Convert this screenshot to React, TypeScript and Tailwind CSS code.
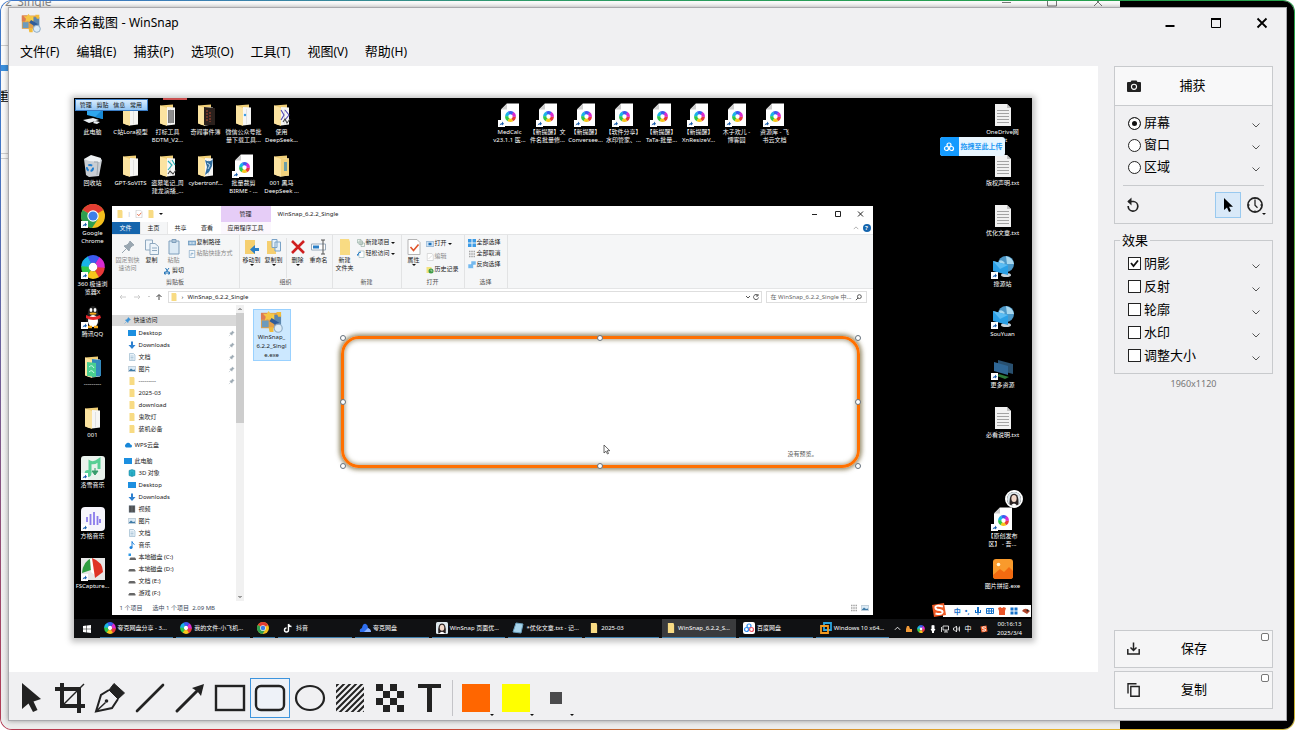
import { useState } from "react";
import type { ReactNode } from "react";

type IconKind =
  | "pc" | "folder" | "archive" | "dark" | "image" | "vs" | "teal" | "zip" | "blue" | "bin" | "link"
  | "chrome" | "rainbow" | "qq" | "green" | "music" | "wave" | "umbrella"
  | "text" | "globe" | "screens" | "photo";

interface DesktopItem {
  x: number;
  y: number;
  icon: IconKind;
  lines: string[];
}

const desktopItems: DesktopItem[] = [
  { x: 19, y: 5, icon: "pc", lines: ["此电脑"] },
  { x: 57, y: 5, icon: "folder", lines: ["C站Lora模型"] },
  { x: 94, y: 5, icon: "archive", lines: ["打标工具", "BDTM_V2..."] },
  { x: 132, y: 5, icon: "dark", lines: ["奇闻事件簿"] },
  { x: 170, y: 5, icon: "image", lines: ["微信公众号批", "量下载工具..."] },
  { x: 208, y: 5, icon: "vs", lines: ["使用", "DeepSeek..."] },
  { x: 19, y: 56, icon: "bin", lines: ["回收站"] },
  { x: 57, y: 56, icon: "folder", lines: ["GPT-SoVITS"] },
  { x: 94, y: 56, icon: "teal", lines: ["盗墓笔记_周", "建龙演播_..."] },
  { x: 132, y: 56, icon: "blue", lines: ["cybertronf..."] },
  { x: 170, y: 56, icon: "link", lines: ["批量裁剪", "BIRME - ..."] },
  { x: 208, y: 56, icon: "zip", lines: ["001 黑马", "DeepSeek ..."] },
  { x: 19, y: 106, icon: "chrome", lines: ["Google", "Chrome"] },
  { x: 19, y: 157, icon: "rainbow", lines: ["360 极速浏", "览器X"] },
  { x: 19, y: 207, icon: "qq", lines: ["腾讯QQ"] },
  { x: 19, y: 257, icon: "green", lines: ["---------"] },
  { x: 19, y: 308, icon: "folder", lines: ["001"] },
  { x: 19, y: 358, icon: "music", lines: ["洛雪音乐"] },
  { x: 19, y: 409, icon: "wave", lines: ["方格音乐"] },
  { x: 19, y: 459, icon: "umbrella", lines: ["FSCapture..."] },
  { x: 436, y: 5, icon: "link", lines: ["MedCalc", "v23.1.1 医..."] },
  { x: 474, y: 5, icon: "link", lines: ["【新提醒】文", "件名批量修..."] },
  { x: 512, y: 5, icon: "link", lines: ["【新提醒】", "Conversee..."] },
  { x: 550, y: 5, icon: "link", lines: ["【软件分享】", "水印管家、..."] },
  { x: 588, y: 5, icon: "link", lines: ["【新提醒】", "TaTa-批量..."] },
  { x: 625, y: 5, icon: "link", lines: ["【新提醒】", "XnResizeV..."] },
  { x: 663, y: 5, icon: "link", lines: ["木子欢儿 -", "博客园"] },
  { x: 701, y: 5, icon: "link", lines: ["资源库 - 飞", "书云文档"] },
  { x: 929, y: 5, icon: "text", lines: ["OneDrive网", ".txt"] },
  { x: 929, y: 56, icon: "text", lines: ["版权声明.txt"] },
  { x: 929, y: 106, icon: "text", lines: ["优化文章.txt"] },
  { x: 929, y: 157, icon: "globe", lines: ["搜源站"] },
  { x: 929, y: 207, icon: "globe", lines: ["SouYuan"] },
  { x: 929, y: 258, icon: "screens", lines: ["更多资源"] },
  { x: 929, y: 308, icon: "text", lines: ["必看说明.txt"] },
  { x: 929, y: 409, icon: "link", lines: ["【原创发布", "区】 - 吾..."] },
  { x: 929, y: 459, icon: "photo", lines: ["图片拼接.exe"] },
];

const menus = [
  ["文件", "F"], ["编辑", "E"], ["捕获", "P"], ["选项", "O"], ["工具", "T"], ["视图", "V"], ["帮助", "H"],
];

const RAINBOW = ["#e93a3a", "#d92bd0", "#3b5bf0", "#19b4e8", "#2fc94b", "#f7c61b"];

const RainbowRing = ({ cx, cy, r, w }: { cx: number; cy: number; r: number; w: number }) => (
  <g fill="none" strokeWidth={w}>
    {RAINBOW.map((c, i) => (
      <circle
        key={c}
        cx={cx}
        cy={cy}
        r={r}
        stroke={c}
        pathLength={60}
        strokeDasharray="10.5 49.5"
        transform={`rotate(${-i * 60} ${cx} ${cy})`}
      />
    ))}
  </g>
);

const Shortcut = () => (
  <g>
    <rect x="0" y="17" width="7" height="7" fill="#fff" />
    <path d="M1.5 22.5 Q2 20 4 20 V18.5 L6 20.8 L4 22.6 V21.4 Q2.5 21.4 1.5 22.5Z" fill="#1b5fae" />
  </g>
);

const FolderBase = ({ children }: { children?: ReactNode }) => (
  <g>
    <path d="M4 2.5 L17 1.5 V20 L8 22 L4 20Z" fill="#f0cf78" />
    <path d="M11 4 L19 4.5 V21.5 L11 22.5Z" fill="#f6f6f4" />
    <path d="M4 2.5 L11 5 V23 L4 20.5Z" fill="#fbe3a0" />
    <path d="M14.5 6 V21.5" stroke="#dcdcdc" strokeWidth="0.8" />
    {children}
  </g>
);

const iconBody: Record<IconKind, ReactNode> = {
  pc: (
    <g>
      <path d="M6 4 L22 6 V16 L6 12Z" fill="#2ea6ee" />
      <path d="M22 6 V16 L14 14Z" fill="#1789d6" />
      <path d="M2 17 L12 15 L18 17 L8 20Z M14 18 l5 1 l-3 2 l-4 -1Z" fill="#e9eef2" />
    </g>
  ),
  folder: <FolderBase />,
  archive: (
    <FolderBase>
      <path d="M12 7 h6 v13 h-6Z" fill="#7d7d7d" />
      <path d="M14 7 v13 M16 7 v13" stroke="#b5b5b5" strokeWidth="0.6" />
    </FolderBase>
  ),
  dark: (
    <FolderBase>
      <path d="M10 4 L21 5 V22 L10 22Z" fill="#2b211d" />
      <path d="M13 7 v11 M16 9 v10" stroke="#8c3d2c" strokeWidth="1.4" strokeDasharray="2 1" />
    </FolderBase>
  ),
  image: (
    <FolderBase>
      <circle cx="13" cy="12" r="1.2" fill="#3b9be0" />
    </FolderBase>
  ),
  vs: (
    <FolderBase>
      <path d="M11 7 l3 5 l-3 5 M15 7 l4 5 l-4 5" stroke="#5148b5" strokeWidth="1.1" fill="none" />
      <path d="M13 19 l2 -3 l2 4 l3 -4" stroke="#444" strokeWidth="1.1" fill="none" />
    </FolderBase>
  ),
  teal: (
    <FolderBase>
      <path d="M12 7 l4 4 l-4 5 M16 6 l3 5" stroke="#27aeb2" strokeWidth="1.1" fill="none" />
      <path d="M12 20 l2 -3 l3 3 l3 -4" stroke="#444" strokeWidth="1.1" fill="none" />
    </FolderBase>
  ),
  blue: (
    <FolderBase>
      <path d="M11 6 Q16 9 19 5 L18 12 L15 18 L11 21 L13 13Z" fill="#2f6c9e" />
      <path d="M13 9 L16 11 L14 15" stroke="#cfe6f5" strokeWidth="0.9" fill="none" />
    </FolderBase>
  ),
  zip: (
    <FolderBase>
      <path d="M11 4 L19 4.5 V21.5 L11 22.5Z" fill="#f1d27c" />
      <path d="M14 8 h3 v9 h-3Z" fill="#6ca0a8" />
    </FolderBase>
  ),
  green: (
    <FolderBase>
      <path d="M11 4 L20 5 V21 L11 22Z" fill="#3389bd" />
      <path d="M6 7 L15 8 V22 L6 21Z" fill="#49cf91" />
      <path d="M8 12 q3 -3 5 1 M8 17 q3 -3 5 1" stroke="#d9fff0" strokeWidth="0.9" fill="none" />
    </FolderBase>
  ),
  bin: (
    <g>
      <path d="M3 5 L19 4 L21 6 L18 22 L8 23 L5 21Z" fill="#c9ced3" />
      <path d="M3 5 L10 1 L20 4 L19 8 L8 7Z" fill="#eef1f3" />
      <path d="M13 8 L17 8 L16 21" stroke="#9ca5ad" fill="none" />
      <circle cx="9" cy="14" r="3" fill="none" stroke="#1f7ed0" strokeWidth="2" strokeDasharray="4 2" />
    </g>
  ),
  link: (
    <g>
      <path d="M9 0.5 H21 V23 H3 V6.5Z" fill="#fff" />
      <path d="M9 0.5 V6.5 H3Z" fill="#cfcfcf" />
      <RainbowRing cx={12.5} cy={13.5} r={3.8} w={3.2} />
      <Shortcut />
    </g>
  ),
  chrome: (
    <g>
      <circle cx="12" cy="12" r="12" fill="#f4bf1d" />
      <path d="M12 12 L1.6 6 A12 12 0 0 1 22.4 6Z" fill="#e23d33" />
      <path d="M12 12 L1.6 6 A12 12 0 0 0 11 24 L17 15Z" fill="#2f9e50" />
      <circle cx="12" cy="12" r="5.7" fill="#fff" />
      <circle cx="12" cy="12" r="4.6" fill="#3f7fe8" />
    </g>
  ),
  rainbow: (
    <g>
      <RainbowRing cx={12} cy={12} r={8} w={7.5} />
      <circle cx="12" cy="12" r="4.3" fill="#fff" />
    </g>
  ),
  qq: (
    <g>
      <ellipse cx="12" cy="14" rx="7" ry="8" fill="#1b1b1b" />
      <ellipse cx="12" cy="7.5" rx="5" ry="6.5" fill="#222" />
      <ellipse cx="12" cy="16" rx="5" ry="6" fill="#fff" />
      <ellipse cx="10" cy="5" rx="1.4" ry="2" fill="#fff" />
      <ellipse cx="14" cy="5" rx="1.4" ry="2" fill="#fff" />
      <ellipse cx="12" cy="8.6" rx="3.5" ry="1.2" fill="#f5a81c" />
      <path d="M5 10 Q12 14 19 10 L20 13 Q12 17 5 13Z" fill="#e5262b" />
      <path d="M7 22 h4 M13 22 h4" stroke="#f5a81c" strokeWidth="2.4" />
      <Shortcut />
    </g>
  ),
  music: (
    <g>
      <rect width="24" height="24" rx="3" fill="#e9f2ec" />
      <path d="M9 17 V6 Q13 8 18 4 V13" stroke="#58cf95" strokeWidth="3" fill="none" />
      <circle cx="7" cy="17.5" r="3.4" fill="#58cf95" />
      <path d="M14 12 v5 M11 15 l3 4 l3 -4Z" fill="#359c6b" stroke="#359c6b" />
      <Shortcut />
    </g>
  ),
  wave: (
    <g>
      <rect width="24" height="24" rx="4" fill="#f6f5fb" />
      <path d="M6 10 v5 M9.5 7 v11 M13 5 v13 M16.5 9 v9 M19 12 v4" stroke="#8a7bea" strokeWidth="1.8" />
      <Shortcut />
    </g>
  ),
  umbrella: (
    <g>
      <rect y="1" width="24" height="22" fill="#e7e7e7" />
      <path d="M1 16 Q2 4 11 1 L10 13Z" fill="#2f9e41" />
      <path d="M9 2 L11 1 L15 19 L10 15Z" fill="#fff" />
      <path d="M11 1 Q22 5 22 15 L14 21Z" fill="#df3426" />
      <Shortcut />
    </g>
  ),
  text: (
    <g>
      <path d="M4 1 H16 L20 5 V23 H4Z" fill="#f1f1f1" />
      <path d="M16 1 V5 H20Z" fill="#c2c2c2" />
      <path d="M6 7.5 H18 M6 10.5 H18 M6 13.5 H18 M6 16.5 H18 M6 19.5 H18" stroke="#a3a3a3" strokeWidth="1" />
    </g>
  ),
  globe: (
    <g>
      <circle cx="15" cy="9" r="8" fill="#4c98c8" />
      <path d="M15 1 Q22 3 23 9 L16 9Z M8 6 Q11 4 14 8 L9 12Z" fill="#a9d8ef" />
      <ellipse cx="15" cy="20" rx="5" ry="2" fill="#c9d4db" />
      <path d="M2 6 L17 10 V20 L2 16Z" fill="#2ba0e6" />
      <path d="M2 6 L17 10 L9 14Z" fill="#5bbcf3" />
      <Shortcut />
    </g>
  ),
  screens: (
    <g>
      <path d="M7 4 L22 8 V18 L7 14Z" fill="#29506f" />
      <path d="M3 6 L17 10 V19 L3 15Z" fill="#2f6796" />
      <path d="M8 18 L18 21 L14 23 L6 20Z" fill="#2d7a3a" />
      <Shortcut />
    </g>
  ),
  photo: (
    <g>
      <rect x="2" y="2" width="20" height="20" rx="3" fill="#f99a2c" />
      <path d="M2 18 L9 12 L13 15 L18 10 L22 14 V19 Q22 22 19 22 H5 Q2 22 2 19Z" fill="#f26a10" />
      <circle cx="7.5" cy="7.5" r="1.8" fill="#fff6d5" />
    </g>
  ),
};

const Glyph = ({ kind, shortcut, className = "size-6" }: { kind: IconKind; shortcut?: boolean; className?: string }) => (
  <svg viewBox="0 0 24 24" className={`shrink-0 ${className}`} aria-hidden="true">
    {iconBody[kind]}
    {shortcut && <Shortcut />}
  </svg>
);

const WinSnapLogo = ({ className }: { className: string }) => (
  <svg viewBox="0 0 24 24" className={className} aria-hidden="true">
    <rect x="1" y="3" width="20" height="16" fill="#e2a04a" />
    <rect x="1" y="3" width="7" height="7" fill="#dd7b52" />
    <rect x="8" y="4" width="7" height="6" fill="#f3cf4c" />
    <rect x="15" y="5" width="7" height="12" fill="#5b86ae" />
    <rect x="2" y="11" width="7" height="7" fill="#6d9bbd" />
    <path d="M9 1 l2 3 h4 l-3 3 l1 4 l-4 -2 l-4 2 l1 -4 l-3 -3 h4Z" fill="#f5c644" />
    <path d="M17 2 h5 v5 h-3Z M9 18 h5 v5 h-4Z" fill="#f2bb3a" />
    <path d="M11 10 L19 15" stroke="#2f5c9a" strokeWidth="4" />
    <circle cx="19" cy="19" r="4.2" fill="#dcecf8" stroke="#8facc6" strokeWidth="1.2" />
  </svg>
);

type SmallKind =
  | "pin" | "copy" | "clip" | "path" | "shortcut" | "cut" | "move" | "copyto" | "delete" | "rename"
  | "folder" | "newitem" | "access" | "props" | "open" | "edit" | "history" | "all" | "none" | "invert"
  | "desk" | "down" | "doc" | "pic" | "cloud" | "cube" | "video" | "note" | "disk" | "cdisk" | "star";

const smallBody: Record<SmallKind, ReactNode> = {
  pin: <path d="M10 2 L14 6 L12 7 L10 9 L9 12 L4 7 L7 6 L9 4Z M6.500 9.500 L2 14" fill="#9aa7b1" stroke="#9aa7b1" />,
  star: <path d="M10 1 L15 6 L13 7 L10 10 L9 13 L3 7 L6 6 L9 3Z M6 10 L1 15" fill="#3c93d8" stroke="#3c93d8" />,
  copy: (
    <g fill="#eef5fb" stroke="#8fa9c0">
      <path d="M1.500 1 h7 v10 h-7Z" />
      <path d="M6 4.500 h5 l3.500 3 v8 h-8.500Z" />
      <path d="M8 9 h5 M8 11.500 h5" />
    </g>
  ),
  clip: <path d="M3 2 h10 v13 h-10Z M6 0.500 h4 v3 h-4Z" fill="#dceaf5" stroke="#7f9fbc" />,
  path: (
    <g>
      <rect x="0.5" y="4" width="15" height="8" fill="#8fb6d6" stroke="#5988b0" />
      <path d="M3 8 h4 M9 8 h4" stroke="#fff" strokeWidth="2" />
    </g>
  ),
  shortcut: <path d="M2.500 1 h11 v14 h-11Z M6 12 v-5 h4 M8 5 l2 2 l-2 2" fill="#f4f8fb" stroke="#5988b0" />,
  cut: <path d="M5 2 L10 10 M12 2 L6 10 M3 10 h3 v4 h-3Z M10 10 h3 v4 h-3Z" fill="none" stroke="#2877b8" strokeWidth="2" />,
  move: (
    <g>
      <path d="M1 1 h10 v14 h-10Z" fill="#f5cf70" />
      <path d="M15 9 h-4 v-3 l-5 4.500 l5 4.500 v-3 h4Z" fill="#2b7fc6" />
    </g>
  ),
  copyto: (
    <g>
      <path d="M1 2 h9 v13 h-9Z" fill="#f5cf70" />
      <path d="M6 0.500 h5 v8 h-5Z M9 3 h5.500 v9 h-5.500Z" fill="#e6f1fa" stroke="#7ba3c7" />
    </g>
  ),
  delete: <path d="M2 2 L14 14 M14 2 L2 14" stroke="#cf1f1f" strokeWidth="2.600" />,
  rename: (
    <g>
      <path d="M0.500 5 h14 v6 h-14Z" fill="#fff" stroke="#9ab" />
      <path d="M2 6.500 h6 v3 h-6Z" fill="#2b7fc6" />
      <path d="M10 1 h4 M12 1 v14 M10 15 h4" stroke="#555" />
    </g>
  ),
  folder: <path d="M3 0 h9 l1 3 v13 h-10Z" fill="#f8db83" />,
  newitem: <path d="M1 1 h7 v7 h-7Z M4 4 h7 v7 h-7Z M8 8 h7 v7 h-7Z" fill="#eef5f1" stroke="#7c9a8e" />,
  access: (
    <g>
      <path d="M4 2 h10 v13 h-10Z" fill="#fff" stroke="#8aa" />
      <path d="M2 10 q0 -6 6 -6 M2 12 l-1 -4" stroke="#2b7fc6" strokeWidth="2" fill="none" />
    </g>
  ),
  props: (
    <g>
      <path d="M2 0.500 h9 l3 3 v12 h-12Z" fill="#fff" stroke="#b5b5b5" />
      <path d="M4.500 8 l3 3.500 l5 -6" stroke="#e0552b" strokeWidth="1.600" fill="none" />
    </g>
  ),
  open: (
    <g>
      <path d="M0.500 3 h15 v10 h-15Z" fill="#cfe3f4" stroke="#5c8db8" />
      <path d="M5 5.500 h6 v5 h-6Z" fill="#1f70b8" />
    </g>
  ),
  edit: <path d="M2.500 1 h9 l3 3 v11 h-12Z M5 12 L12 5" fill="#fff" stroke="#bbb" />,
  history: (
    <g>
      <path d="M1 2 h10 v12 h-10Z" fill="#f3e27c" />
      <circle cx="10" cy="10" r="5" fill="#3f9b46" />
      <path d="M10 7 v3 h3" stroke="#fff" fill="none" />
    </g>
  ),
  all: <path d="M0 0 h7 v7 h-7Z M9 0 h7 v7 h-7Z M0 9 h7 v7 h-7Z M9 9 h7 v7 h-7Z" fill="#3c9be6" />,
  none: <path d="M2 3 h12 M2 8 h12 M2 13 h12" stroke="#a5a5a5" strokeWidth="3" strokeDasharray="3 1.500" />,
  invert: <path d="M6 0 h10 v8 h-5 v7 h-11 v-9 h6Z" fill="#75b9ee" stroke="#fff" />,
  desk: <path d="M0 2 h16 v12 h-16Z" fill="#1c8fe0" />,
  down: <path d="M6 1 h4 v7 h5 l-7 8 l-7 -8 h5Z" fill="#2c80d0" />,
  doc: <path d="M3 1 h8 l3 3 v11 h-11Z M5 6 h6 M5 9 h6 M5 12 h6" fill="#eaf3fa" stroke="#7ba0bd" />,
  pic: (
    <g>
      <path d="M0.500 3 h15 v10 h-15Z" fill="#dcebf6" stroke="#93a9b8" />
      <path d="M2 11 l4 -4 l4 3 l4 -1 v3 h-12Z" fill="#3f7ca8" />
    </g>
  ),
  cloud: <path d="M4 13 a4 4 0 0 1 0 -7 a5 5 0 0 1 9 1 a3 3 0 0 1 0 6Z" fill="#1686d8" />,
  cube: <path d="M2 3 L8 1 L14 3 V13 L8 15 L2 13Z M8 6 V15" fill="#2bb1c9" stroke="#127d98" />,
  video: <path d="M2 1 h12 v14 h-12Z M5 4 h6 M5 8 h6 M5 12 h6" fill="#444" stroke="#9ab" />,
  note: (
    <g>
      <path d="M8 13 V1 q1 4 5 6" stroke="#1e82dc" strokeWidth="2" fill="none" />
      <circle cx="6" cy="13" r="3" fill="#1e82dc" />
    </g>
  ),
  disk: <path d="M1 11 L3 8 H13 L15 11 V13 H1Z" fill="#666" />,
  cdisk: (
    <g>
      <path d="M3 12 L5 9 H14 L16 12 V14 H3Z" fill="#666" />
      <path d="M1 1 h5 v5 h-5Z" fill="#2c98e6" />
    </g>
  ),
};

const Small = ({ kind, className = "size-2" }: { kind: SmallKind; className?: string }) => (
  <svg viewBox="0 0 16 16" className={`shrink-0 ${className}`} aria-hidden="true">
    {smallBody[kind]}
  </svg>
);

const Caret = () => (
  <svg viewBox="0 0 4 2" className="h-[2px] w-1 shrink-0" aria-hidden="true">
    <path d="M0 0 H4 L2 2Z" fill="#111" />
  </svg>
);

interface BigToolProps {
  icon: SmallKind;
  lines: string[];
  width: string;
  caret?: boolean;
  dim?: boolean;
}

const BigTool = ({ icon, lines, width, caret, dim }: BigToolProps) => (
  <button className={`flex flex-col items-center ${width} ${dim ? "text-[#888]" : ""}`}>
    <Small kind={icon} className="my-px size-4" />
    {lines.map((l) => (
      <span key={l} className="mt-px leading-[7px] whitespace-nowrap">{l}</span>
    ))}
    {caret && <Caret />}
  </button>
);

const RowTool = ({ icon, label, caret, dim }: { icon: SmallKind; label: string; caret?: boolean; dim?: boolean }) => (
  <button className={`flex items-center gap-px whitespace-nowrap ${dim ? "text-[#888]" : ""}`}>
    <Small kind={icon} />
    <span>{label}</span>
    {caret && <Caret />}
  </button>
);

const Group = ({ label, width, children }: { label: string; width: string; children: ReactNode }) => (
  <div className={`flex shrink-0 flex-col border-r border-[#e2e3e4] ${width}`}>
    <div className="flex flex-1 pt-[3px]">{children}</div>
    <div className="pb-px text-center text-[#555]">{label}</div>
  </div>
);

interface TreeRow {
  icon: SmallKind;
  label: string;
  pinned?: boolean;
}

const quickRows: TreeRow[] = [
  { icon: "desk", label: "Desktop", pinned: true },
  { icon: "down", label: "Downloads", pinned: true },
  { icon: "doc", label: "文档", pinned: true },
  { icon: "pic", label: "图片", pinned: true },
  { icon: "folder", label: "---------", pinned: true },
  { icon: "folder", label: "2025-03" },
  { icon: "folder", label: "download" },
  { icon: "folder", label: "鬼吹灯" },
  { icon: "folder", label: "装机必备" },
];

const pcRows: TreeRow[] = [
  { icon: "cube", label: "3D 对象" },
  { icon: "desk", label: "Desktop" },
  { icon: "down", label: "Downloads" },
  { icon: "video", label: "视频" },
  { icon: "pic", label: "图片" },
  { icon: "doc", label: "文档" },
  { icon: "note", label: "音乐" },
  { icon: "cdisk", label: "本地磁盘 (C:)" },
  { icon: "disk", label: "本地磁盘 (D:)" },
  { icon: "disk", label: "文档 (E:)" },
  { icon: "disk", label: "游戏 (F:)" },
  { icon: "disk", label: "娱乐 (G:)" },
];

const TreeRows = ({ rows }: { rows: TreeRow[] }) => (
  <>
    {rows.map((r) => (
      <li key={r.label} className="flex h-3 items-center gap-[3px] pr-px pl-4">
        <Small kind={r.icon} />
        <span className="flex-1">{r.label}</span>
        {r.pinned && <Small kind="pin" className="size-[7px]" />}
      </li>
    ))}
  </>
);

const Explorer = () => (
  <div className="absolute top-[108px] left-[38px] flex h-[409px] w-[761px] flex-col bg-white text-[#222]">
    <div className="flex h-4 shrink-0 items-center">
      <div className="flex w-[109px] items-center gap-1 pl-1">
        <Small kind="folder" />
        <span className="text-[#aaa]">|</span>
        <Small kind="props" />
        <Small kind="folder" />
        <Caret />
      </div>
      <div className="flex h-full w-[50px] items-center justify-center bg-[#e6cdf7]">管理</div>
      <div className="flex-1 pl-[7px]">WinSnap_6.2.2_Single</div>
      <svg viewBox="0 0 60 8" className="mr-[6px] h-2 w-[60px]" fill="none" stroke="#222" aria-hidden="true">
        <path d="M5 4.500 h5 M28.500 1.500 h5 v5 h-5Z M51 1.500 l5 5 M56 1.500 l-5 5" />
      </svg>
    </div>
    <div className="flex h-3 shrink-0 items-stretch">
      <button className="w-7 bg-[#1565ad] text-white">文件</button>
      <button className="w-7 border-x border-[#e8e8e8] bg-[#f5f6f7]">主页</button>
      <button className="w-[26px]">共享</button>
      <button className="w-[27px]">查看</button>
      <button className="w-[50px] bg-[#fbf7fd]">应用程序工具</button>
      <span className="flex-1" />
      <svg viewBox="0 0 8 8" className="mr-1 size-[6px] self-center" fill="none" stroke="#999" aria-hidden="true">
        <path d="M1 5.500 L4 2.500 L7 5.500" />
      </svg>
      <span className="mr-[2px] flex size-2 items-center justify-center self-center rounded-full bg-[#1565ad] font-bold text-white">?</span>
    </div>
    <div className="flex h-[55px] shrink-0 border-y border-[#e4e5e6] bg-[#f5f6f7]">
      <Group label="剪贴板" width="w-[128px]">
        <BigTool icon="pin" lines={["固定到快", "速访问"]} width="w-8" dim />
        <BigTool icon="copy" lines={["复制"]} width="w-4" />
        <div className="flex w-7 flex-col items-center">
          <BigTool icon="clip" lines={["粘贴"]} width="w-7" dim />
          <div className="mt-[2px]">
            <RowTool icon="cut" label="剪切" />
          </div>
        </div>
        <div className="flex flex-col gap-[2px]">
          <RowTool icon="path" label="复制路径" />
          <RowTool icon="shortcut" label="粘贴快捷方式" dim />
        </div>
      </Group>
      <Group label="组织" width="w-[93px]">
        <BigTool icon="move" lines={["移动到"]} width="w-6" caret />
        <BigTool icon="copyto" lines={["复制到"]} width="w-5" caret />
        <div className="ml-[2px] border-l border-[#e2e3e4]" />
        <BigTool icon="delete" lines={["删除"]} width="w-[22px]" caret />
        <BigTool icon="rename" lines={["重命名"]} width="w-5" />
      </Group>
      <Group label="新建" width="w-[69px]">
        <BigTool icon="folder" lines={["新建", "文件夹"]} width="w-6" />
        <div className="flex flex-col gap-[2px]">
          <RowTool icon="newitem" label="新建项目" caret />
          <RowTool icon="access" label="轻松访问" caret />
        </div>
      </Group>
      <Group label="打开" width="w-[63px]">
        <BigTool icon="props" lines={["属性"]} width="w-6" caret />
        <div className="flex flex-col gap-1 pt-px">
          <RowTool icon="open" label="打开" caret />
          <RowTool icon="edit" label="编辑" dim />
          <RowTool icon="history" label="历史记录" />
        </div>
      </Group>
      <Group label="选择" width="w-[43px]">
        <div className="flex flex-col gap-[2px] pl-[3px]">
          <RowTool icon="all" label="全部选择" />
          <RowTool icon="none" label="全部取消" />
          <RowTool icon="invert" label="反向选择" />
        </div>
      </Group>
    </div>
    <div className="flex h-4 shrink-0 items-center gap-1 px-[6px]">
      <svg viewBox="0 0 46 8" className="h-2 w-[46px]" fill="none" aria-hidden="true">
        <path d="M2 4 h6 M4 2 l-2 2 l2 2 M16 4 h6 M20 2 l2 2 l-2 2 M30 3 l1 1 l1 -1" stroke="#ccc" />
        <path d="M41 7 V2 M38.500 4 L41 1.500 L43.500 4" stroke="#444" />
      </svg>
      <div className="flex h-3 flex-1 items-center gap-1 border border-[#dedede] px-px">
        <Small kind="folder" />
        <span>›</span>
        <span className="flex-1">WinSnap_6.2.2_Single</span>
        <svg viewBox="0 0 16 8" className="h-2 w-4" fill="none" stroke="#555" aria-hidden="true">
          <path d="M2 3 l2 2 l2 -2 M14 2.500 a2.500 2.500 0 1 0 0.500 2 M14 1 v2 h-2" />
        </svg>
      </div>
      <div className="flex h-3 w-[101px] items-center justify-between border border-[#dedede] px-1 text-[#666]">
        <span>在 WinSnap_6.2.2_Single 中...</span>
        <svg viewBox="0 0 8 8" className="size-[7px]" fill="none" stroke="#444" aria-hidden="true">
          <circle cx="5" cy="3" r="2.2" />
          <path d="M3.500 4.500 L1 7" />
        </svg>
      </div>
    </div>
    <div className="flex min-h-0 flex-1">
      <ul className="w-[124px] overflow-hidden pt-[10px]">
        <li className="mb-px flex h-[11px] items-center gap-[3px] bg-[#d9d9d9] pl-3">
          <Small kind="star" className="size-[7px]" />
          快速访问
        </li>
        <TreeRows rows={quickRows} />
        <li className="my-1 flex h-3 items-center gap-[3px] pl-3">
          <Small kind="cloud" />
          WPS云盘
        </li>
        <li className="flex h-3 items-center gap-[3px] pl-3">
          <Small kind="desk" />
          此电脑
        </li>
        <TreeRows rows={pcRows} />
      </ul>
      <div className="flex w-2 flex-col items-center bg-[#f1f1f1]">
        <svg viewBox="0 0 8 8" className="size-2" fill="none" stroke="#444" aria-hidden="true">
          <path d="M2.500 5 L4 3.500 L5.500 5" />
        </svg>
        <div className="h-[110px] w-full bg-[#cdcdcd]" />
        <div className="flex-1" />
        <svg viewBox="0 0 8 8" className="size-2" fill="none" stroke="#444" aria-hidden="true">
          <path d="M2.500 3 L4 4.500 L5.500 3" />
        </svg>
      </div>
      <div className="px-[9px] pt-1">
        <div className="flex h-[52px] w-[38px] flex-col items-center border border-[#99d1ff] bg-[#cce8ff] text-center leading-[9px]">
          <WinSnapLogo className="size-[25px]" />
          <span>WinSnap_</span>
          <span>6.2.2_Singl</span>
          <span>e.exe</span>
        </div>
      </div>
    </div>
    <div className="flex h-[14px] shrink-0 items-center gap-[10px] pr-1 pl-2 text-[#3c4a5c]">
      <span>1 个项目</span>
      <span className="flex-1">选中 1 个项目&nbsp; 2.09 MB</span>
      <span className="flex gap-[3px]">
        <Small kind="none" />
        <Small kind="pic" />
      </span>
    </div>
  </div>
);

const NotepadIcon = () => (
  <svg viewBox="0 0 12 12" className="size-3 shrink-0" aria-hidden="true">
    <path d="M4 1 L11 2 L9 11 L1 10Z" fill="#a8d4ea" stroke="#6ba0bd" />
  </svg>
);

const Portrait = ({ className }: { className: string }) => (
  <svg viewBox="0 0 16 16" className={className} aria-hidden="true">
    <rect width="16" height="16" rx="2" fill="#dfe9ee" />
    <path d="M3 15 Q2 2 8 2 Q14 2 13 15Z" fill="#2c2424" />
    <ellipse cx="8" cy="7.5" rx="3" ry="4" fill="#f2d8c9" />
    <path d="M4 16 Q8 10 12 16Z" fill="#fff" />
  </svg>
);

const SogouS = ({ className }: { className: string }) => (
  <svg viewBox="0 0 16 16" className={className} aria-hidden="true">
    <path d="M1 3 L13 1 L15 13 L3 15Z" fill="#ee5a24" />
    <path d="M12 4.500 Q4 2.500 4.500 6 Q5 8 8.500 8 Q12 8.500 11.500 10.500 Q10.500 13 4.500 11.500" stroke="#fff" strokeWidth="2" fill="none" />
  </svg>
);

const TikTok = () => (
  <svg viewBox="0 0 12 12" className="size-3 shrink-0" aria-hidden="true">
    <path d="M6.500 2 V8 A2 2 0 1 1 4.500 6 M6.500 2 Q7 4.500 9.500 4.500" stroke="#fff" strokeWidth="1.400" fill="none" />
  </svg>
);

const QuarkCloud = () => (
  <svg viewBox="0 0 12 12" className="size-3 shrink-0" aria-hidden="true">
    <path d="M1 10 Q0 7 3 6 Q4 1 7 2 Q9 3 9 6 L12 10Z" fill="#2f6ff0" />
    <path d="M5 10 L9 6 Q12 7 12 10Z" fill="#8db4ff" />
  </svg>
);

const BaiduPan = ({ white }: { white?: boolean }) => (
  <svg viewBox="0 0 12 12" className="size-3 shrink-0" fill="none" aria-hidden="true">
    {!white && <rect width="12" height="12" rx="2" fill="#fff" />}
    <circle cx="6" cy="4" r="2" stroke={white ? "#fff" : "#2e8cf0"} strokeWidth="1.200" />
    <circle cx="3.500" cy="7.500" r="2" stroke={white ? "#fff" : "#2e8cf0"} strokeWidth="1.200" />
    <circle cx="8.500" cy="7.500" r="2" stroke={white ? "#fff" : "#ee5566"} strokeWidth="1.200" />
  </svg>
);

const VmIcon = () => (
  <svg viewBox="0 0 12 12" className="size-3 shrink-0" fill="none" aria-hidden="true">
    <path d="M4 1 h7 v7 h-7Z" stroke="#2aa3dd" strokeWidth="1.800" />
    <path d="M1 4 h7 v7 h-7Z" stroke="#f39a1e" strokeWidth="1.800" />
  </svg>
);

const tasks: { label: string; icon: ReactNode; active?: boolean; narrow?: boolean }[] = [
  { label: "夸克网盘分享 - 3...", icon: <Glyph kind="rainbow" className="size-3" /> },
  { label: "我的文件-小飞机...", icon: <Glyph kind="rainbow" className="size-3" /> },
  { label: "", icon: <Glyph kind="chrome" className="size-3" />, narrow: true },
  { label: "抖音", icon: <TikTok /> },
  { label: "夸克网盘", icon: <QuarkCloud /> },
  { label: "WinSnap 页面优...", icon: <Portrait className="size-3 shrink-0" /> },
  { label: "*优化文章.txt - 记...", icon: <NotepadIcon /> },
  { label: "2025-03", icon: <Small kind="folder" className="size-[10px]" /> },
  { label: "WinSnap_6.2.2_S...", icon: <Small kind="folder" className="size-[10px]" />, active: true },
  { label: "百度网盘", icon: <BaiduPan /> },
  { label: "Windows 10 x64...", icon: <VmIcon /> },
];

const Taskbar = () => (
  <div className="absolute inset-x-0 bottom-0 flex h-[19px] items-stretch bg-[#101113] text-white">
    <button className="flex w-[26px] items-center justify-center" aria-label="开始">
      <svg viewBox="0 0 8 8" className="size-2" fill="#fff" aria-hidden="true">
        <path d="M0 1 L3.500 0.500 V3.700 H0Z M4 0.400 L8 0 V3.700 H4Z M0 4.200 H3.500 V7.500 L0 7Z M4 4.200 H8 V8 L4 7.600Z" />
      </svg>
    </button>
    <div className="flex flex-1 gap-[3px]">
      {tasks.map((t, i) => (
        <button
          key={i}
          aria-label={t.label || "Chrome"}
          className={`flex items-center gap-[2px] border-b border-[#3f7fae] pl-1 whitespace-nowrap ${
            t.narrow ? "w-[22px] shrink-0" : "min-w-0 flex-1"
          } ${t.active ? "bg-[#3a3b3d]" : ""}`}
        >
          {t.icon}
          <span>{t.label}</span>
        </button>
      ))}
    </div>
    <div className="flex w-[98px] items-center gap-1 pl-1">
      <svg viewBox="0 0 8 8" className="size-[7px]" fill="none" stroke="#fff" aria-hidden="true">
        <path d="M1 5.500 L4 2.500 L7 5.500" />
      </svg>
      <svg viewBox="0 0 8 8" className="size-2" aria-hidden="true">
        <path d="M2 1 h2 l1 3 h2 v3 h-6 v-3Z" fill="#f19a38" />
      </svg>
      <Glyph kind="rainbow" className="size-2" />
      <svg viewBox="0 0 8 8" className="size-2" fill="#fff" aria-hidden="true">
        <path d="M2.500 0.500 Q4 -0.500 5.500 0.500 V4.500 Q4 5.500 2.500 4.500Z M1.500 4 H6.500 L5 6.500 V8 H3 V6.500Z" />
      </svg>
      <svg viewBox="0 0 8 8" className="size-2" fill="none" stroke="#fff" strokeWidth="0.800" aria-hidden="true">
        <path d="M2 1 h5.500 v4 h-5.500Z M5 5 v2 M3 7 h4 M0.500 2 v5" />
      </svg>
      <svg viewBox="0 0 8 8" className="size-2" fill="none" stroke="#fff" strokeWidth="0.800" aria-hidden="true">
        <path d="M0.500 3 h1 l2 -2 v6 l-2 -2 h-1Z M5 2.500 v3 M6.500 1.500 v5" />
      </svg>
      <span className="text-[7px]">中</span>
      <SogouS className="ml-1 size-2" />
    </div>
    <div className="flex w-11 flex-col justify-center text-center leading-[9px]">
      <span>00:16:13</span>
      <span>2025/3/4</span>
    </div>
  </div>
);

const handles = [
  "-top-1 -left-1",
  "-top-1 left-1/2 -translate-x-1/2",
  "-top-1 -right-1",
  "top-1/2 -left-1 -translate-y-1/2",
  "top-1/2 -right-1 -translate-y-1/2",
  "-bottom-1 -left-1",
  "-bottom-1 left-1/2 -translate-x-1/2",
  "-bottom-1 -right-1",
];

const Desktop = () => (
  <div className="relative h-[540px] w-[958px] shrink-0 overflow-hidden bg-black text-[6px] leading-[9px] shadow-[0_1px_6px_3px_rgba(0,0,0,0.25)]">
    {desktopItems.map((it, i) => (
      <div
        key={i}
        className="absolute flex w-12 -translate-x-1/2 flex-col items-center text-center leading-[8px] whitespace-nowrap text-white"
        style={{ left: it.x, top: it.y }}
      >
        <Glyph kind={it.icon} shortcut={it.icon === "chrome" || it.icon === "rainbow"} className="mb-px size-6" />
        {it.lines.map((l) => (
          <span key={l}>{l}</span>
        ))}
      </div>
    ))}
    <div className="absolute top-0 left-[89px] h-[2px] w-6 bg-[#c94f4f]" />
    <div className="absolute top-px left-px flex h-3 w-[73px] items-center justify-around border border-[#3a7cc4] bg-linear-to-b from-[#d8ecfd] to-[#92c5f4] px-[2px] text-[#111]">
      <span>管理</span>
      <span>剪贴</span>
      <span>信息</span>
      <span>常用</span>
    </div>
    <div className="absolute top-[39px] left-[866px] flex h-[19px] w-[65px] overflow-hidden rounded-[3px] bg-[#e9f6ff] text-[7px] font-bold text-[#2196f3]">
      <div className="flex w-[19px] items-center justify-center bg-[#159bff]">
        <BaiduPan white />
      </div>
      <span className="flex-1 self-center text-center whitespace-nowrap">拖拽至此上传</span>
    </div>
    <div className="absolute top-[392px] left-[931px] size-[18px] overflow-hidden rounded-full border-2 border-white">
      <Portrait className="size-full" />
    </div>
    <Explorer />
    <div className="absolute top-[507px] right-px flex h-3 w-[88px] items-center justify-end gap-1 bg-white pr-px text-[7px] font-bold text-[#1570c9]">
      <span>中</span>
      <span>•,</span>
      <svg viewBox="0 0 8 8" className="size-2" fill="#1570c9" aria-hidden="true">
        <path d="M3 0 h2 v5 h-2Z M1 3 h1 v2 h4 v-2 h1 v3 h-2.500 v2 h-1 v-2 h-2.500Z" />
      </svg>
      <svg viewBox="0 0 8 8" className="size-2" fill="none" stroke="#1570c9" aria-hidden="true">
        <path d="M0.500 1.500 h7 v5 h-7Z M3 1.500 v5 M5.500 1.500 v5 M0.500 4 h7" />
      </svg>
      <svg viewBox="0 0 8 8" className="size-2" fill="#ea5428" aria-hidden="true">
        <path d="M0 1 L2.500 0 Q4 2 5.500 0 L8 1 L7 4 V8 H1 V4Z" />
      </svg>
      <svg viewBox="0 0 8 8" className="size-2" fill="#1570c9" aria-hidden="true">
        <path d="M0.500 0.500 h3 v3 h-3Z M4.500 0.500 h3 v3 h-3Z M0.500 4.500 h3 v3 h-3Z M4.500 4.500 h3 v3 h-3Z" />
      </svg>
      <svg viewBox="0 0 8 8" className="size-2" aria-hidden="true">
        <path d="M0 4 Q2 1 5 2 L8 4 L5 7Z" fill="#b0452b" />
        <circle cx="5.500" cy="3.500" r="1" fill="#222" />
      </svg>
    </div>
    <SogouS className="absolute top-[504px] left-[857px] size-4" />
    <Taskbar />
    <span className="absolute top-[352px] left-[714px] text-[#555]">没有预览。</span>
    <div className="absolute top-[238px] left-[267px] h-[132px] w-[519px] rounded-[18px] border-3 border-[#ff7000] shadow-[0_0_4px_2px_rgba(110,95,50,0.7),inset_0_0_4px_1px_rgba(110,95,50,0.6)]">
      {handles.map((pos) => (
        <span key={pos} className={`absolute size-[6px] rounded-full border border-[#66717c] bg-white ${pos}`} />
      ))}
    </div>
    <svg viewBox="0 0 8 11" className="absolute top-[346px] left-[529px] h-[11px] w-2" aria-hidden="true">
      <path d="M1 1 V9 L3 7.200 L4.500 10 L5.500 9.500 L4.200 6.700 H6.800Z" fill="#fff" stroke="#444" strokeWidth="0.800" />
    </svg>
  </div>
);

const drawTools: { name: string; body: ReactNode }[] = [
  { name: "选择", body: <path d="M8 1 V27 L14.500 21.500 L19 30 L23.500 28 L19.500 19.500 L27 17Z" fill="#222" /> },
  {
    name: "裁剪",
    body: (
      <g fill="none" stroke="#222">
        <path d="M8 1 V24 H31 M1 7 H25 V31" strokeWidth="4" />
        <path d="M10 22 L30 2" strokeWidth="1.500" />
      </g>
    ),
  },
  {
    name: "钢笔",
    body: (
      <g fill="none" stroke="#222">
        <path d="M20 1.500 L30.500 11 L24 17 L15 8Z" fill="#222" />
        <path d="M15 8 L7 13 L2 29.500 L18 26 L24 17" strokeWidth="2" />
        <path d="M2.500 29 L11.500 20.500" strokeWidth="1.500" />
        <circle cx="12.500" cy="19" r="1.800" fill="#222" stroke="none" />
      </g>
    ),
  },
  { name: "直线", body: <path d="M3 29 L29 3" stroke="#222" strokeWidth="2.600" strokeLinecap="round" /> },
  {
    name: "箭头",
    body: (
      <g>
        <path d="M3 29 L24 8" stroke="#222" strokeWidth="3" strokeLinecap="round" />
        <path d="M30 2 L27 14 L23.500 9.500 L18 6Z" fill="#222" />
      </g>
    ),
  },
  { name: "矩形", body: <rect x="2" y="4" width="28" height="24" fill="none" stroke="#222" strokeWidth="2.400" /> },
  { name: "圆角矩形", body: <rect x="2" y="4" width="28" height="24" rx="5" fill="none" stroke="#222" strokeWidth="2.400" /> },
  { name: "椭圆", body: <ellipse cx="16" cy="16" rx="14" ry="12" fill="none" stroke="#222" strokeWidth="2.200" /> },
  {
    name: "阴影线",
    body: (
      <g>
        <clipPath id="hatchClip">
          <rect x="2" y="2" width="28" height="28" />
        </clipPath>
        <path
          clipPath="url(#hatchClip)"
          d="M-2 14 L14 -2 M-2 20 L20 -2 M-2 26 L26 -2 M-2 32 L32 -2 M2 34 L34 2 M8 34 L34 8 M14 34 L34 14 M20 34 L34 20 M26 34 L34 26 M-2 8 L8 -2"
          stroke="#222"
          strokeWidth="2"
        />
      </g>
    ),
  },
  {
    name: "马赛克",
    body: (
      <path
        d="M2 2h7v7h-7Z M16 2h7v7h-7Z M9 9h7v7h-7Z M23 9h7v7h-7Z M2 16h7v7h-7Z M16 16h7v7h-7Z M9 23h7v7h-7Z M23 23h7v7h-7Z"
        fill="#222"
      />
    ),
  },
  { name: "文本", body: <path d="M4 2 H27 V6 H18 V30 H13 V6 H4Z" fill="#222" /> },
];

const ColorButton = ({ label, swatch }: { label: string; swatch: string }) => (
  <button aria-label={label} className="relative flex size-10 items-center justify-center">
    <span className={swatch} />
    <span className="absolute right-[2px] bottom-[2px] flex">
      <Caret />
    </span>
  </button>
);

const ToolBar = () => {
  const [tool, setTool] = useState("圆角矩形");

  return (
    <div className="flex h-12 items-center pt-1 pl-px">
      {drawTools.map((t) => (
        <button
          key={t.name}
          aria-label={t.name}
          onClick={() => setTool(t.name)}
          className={`flex size-10 items-center justify-center border ${
            tool === t.name ? "border-[#3d94dd] bg-[#eef2f8]" : "border-transparent"
          }`}
        >
          <svg viewBox="0 0 32 32" className="size-8" aria-hidden="true">
            {t.body}
          </svg>
        </button>
      ))}
      <div className="mr-[3px] ml-[2px] h-9 w-px bg-[#c4c4c8]" />
      <ColorButton label="线条颜色" swatch="size-7 bg-[#ff6600]" />
      <ColorButton label="填充颜色" swatch="size-7 bg-[#ffff00]" />
      <ColorButton label="线条粗细" swatch="size-3 bg-[#4b4b4d]" />
    </div>
  );
};

const Chevron = ({ label }: { label: string }) => (
  <button aria-label={label} className="mt-[5px] flex size-4 items-center justify-center">
    <svg viewBox="0 0 8 5" className="h-[5px] w-2" fill="none" stroke="#555" aria-hidden="true">
      <path d="M0.500 0.500 L4 4 L7.500 0.500" />
    </svg>
  </button>
);

const effectNames = ["阴影", "反射", "轮廓", "水印", "调整大小"];

const ActionButton = ({ label, auto, children }: { label: string; auto: string; children: ReactNode }) => (
  <div className="relative">
    <button className="flex h-[38px] w-full items-center border border-[#c8cacd] bg-[#f5f5f6] pl-3">
      <svg viewBox="0 0 13 14" className="h-[14px] w-[13px]" fill="none" stroke="#222" aria-hidden="true">
        {children}
      </svg>
      <span className="flex-1 pr-6 text-center">{label}</span>
    </button>
    <input
      type="checkbox"
      aria-label={auto}
      className="absolute top-[3px] right-1 size-2 appearance-none rounded-[2px] border border-[#777] bg-white checked:bg-[#444]"
    />
  </div>
);

const SidePanel = () => {
  const [source, setSource] = useState("屏幕");
  const [effects, setEffects] = useState<string[]>(["阴影"]);

  const toggle = (name: string) =>
    setEffects((prev) => (prev.includes(name) ? prev.filter((n) => n !== name) : [...prev, name]));

  return (
    <aside className="flex w-[188px] shrink-0 flex-col pr-[13px] pb-[11px] pl-4">
      <div className="border border-[#c8cacd]">
        <button className="flex h-[39px] w-full items-center border-b border-[#c8cacd] bg-[#f8f8f9] pb-px pl-3">
          <svg viewBox="0 0 14 14" className="size-[14px]" aria-hidden="true">
            <path d="M4.500 1.500 H9.500 L10.500 3 H13 Q14 3 14 4 V12 Q14 13 13 13 H1 Q0 13 0 12 V4 Q0 3 1 3 H3.500Z" fill="#222" />
            <circle cx="7" cy="7.800" r="3.100" fill="#fff" />
            <circle cx="7" cy="7.800" r="2" fill="#222" />
          </svg>
          <span className="flex-1 pr-7 text-center">捕获</span>
        </button>
        <div className="flex flex-col px-2 pt-[6px] pb-[7px]">
          {["屏幕", "窗口", "区域"].map((name) => (
            <div key={name} className="flex h-[22px] items-center justify-between pl-[5px]">
              <label className="flex items-center gap-[3px]">
                <input
                  type="radio"
                  name="source"
                  checked={source === name}
                  onChange={() => setSource(name)}
                  className="size-[13px] appearance-none rounded-full border border-[#222] bg-white checked:bg-[#111] checked:shadow-[inset_0_0_0_3px_#fff]"
                />
                {name}
              </label>
              <Chevron label={`${name}选项`} />
            </div>
          ))}
        </div>
        <div className="mx-2 border-t border-[#c8cacd]" />
        <div className="mr-1 ml-2 flex items-center py-[5px]">
          <button aria-label="重复上次捕获" className="flex size-[26px] items-center pl-[3px]">
            <svg viewBox="0 0 14 15" className="h-[15px] w-[14px]" aria-hidden="true">
              <path d="M2 4.500 H7.500 A4.800 4.800 0 1 1 2.200 9" fill="none" stroke="#222" strokeWidth="1.700" />
              <path d="M5.500 0.500 V8.500 L1.300 4.500Z" fill="#222" />
            </svg>
          </button>
          <span className="flex-1" />
          <button aria-label="包含光标" className="flex size-[26px] items-center justify-center border border-[#99c9ef] bg-[#d9e9f8]">
            <svg viewBox="0 0 12 16" className="h-4 w-3" aria-hidden="true">
              <path d="M2 1 V13 L5 10.500 L7 15 L9 14 L7 9.800 H11Z" fill="#000" />
            </svg>
          </button>
          <button aria-label="延时" className="relative flex size-[27px] items-center justify-center">
            <svg viewBox="0 0 16 16" className="size-4" fill="none" stroke="#222" aria-hidden="true">
              <circle cx="8" cy="8" r="7.100" strokeWidth="1.700" />
              <path d="M8 3 V8.300 L10.500 10.800 M8 1 v1.500 M15 8 h-1.500 M8 15 v-1.500 M1 8 h1.500" strokeWidth="1.300" />
            </svg>
            <span className="absolute right-[2px] bottom-[3px] flex">
              <Caret />
            </span>
          </button>
        </div>
      </div>
      <fieldset className="mt-[8px] border border-[#c8cacd] pb-[6px]">
        <legend className="ml-[5px] px-[2px] leading-[17px]">效果</legend>
        <div className="flex flex-col px-2 pt-[3px]">
          {effectNames.map((name) => (
            <div key={name} className="flex h-[23px] items-center justify-between pl-[5px]">
              <label className="flex items-center gap-[3px]">
                <span className="grid size-[13px]">
                  <input
                    type="checkbox"
                    checked={effects.includes(name)}
                    onChange={() => toggle(name)}
                    className="col-start-1 row-start-1 size-[13px] appearance-none border border-[#222] bg-white"
                  />
                  {effects.includes(name) && (
                    <svg viewBox="0 0 13 13" className="pointer-events-none col-start-1 row-start-1 size-[13px]" fill="none" aria-hidden="true">
                      <path d="M3 6 L5.500 9 L10 3.500" stroke="#111" strokeWidth="1.800" />
                    </svg>
                  )}
                </span>
                {name}
              </label>
              <Chevron label={`${name}选项`} />
            </div>
          ))}
        </div>
      </fieldset>
      <div className="mt-1 text-center text-[9px] leading-[12px] text-[#777]">1960x1120</div>
      <div className="flex-1" />
      <div className="flex flex-col gap-[3px]">
        <ActionButton label="保存" auto="自动保存">
          <path d="M6.500 0.500 V8 M3.500 5.500 L6.500 8.500 L9.500 5.500 M0.800 7 V12 H12.200 V7" strokeWidth="1.500" />
        </ActionButton>
        <ActionButton label="复制" auto="自动复制">
          <path d="M3.800 3.500 h8.400 v9.700 h-8.400Z M1 10.500 V0.800 H9.500" strokeWidth="1.400" />
        </ActionButton>
      </div>
    </aside>
  );
};

// whatever window is left showing behind the editor
const Backdrop = () => (
  <div className="absolute inset-0 flex overflow-hidden rounded-[11px] bg-[#ececee]" aria-hidden="true">
    <div className="relative flex-1 bg-linear-to-b from-[#fbfbfb] to-[#ececec]">
      <span className="absolute -top-[6px] left-1 text-xs leading-[14px] text-[#888]">2_Single</span>
      <div className="absolute top-11 left-0 h-px w-2 bg-[#ccc]" />
      <div className="absolute top-16 left-0 h-[6px] w-2 bg-[#3b8fdc]" />
      <span className="absolute top-[88px] -left-1 text-xs">重命</span>
      <div className="absolute top-[152px] left-0 h-[6px] w-2 border-y border-[#ccc]" />
      <svg viewBox="0 0 110 8" className="absolute top-0 right-2 h-2 w-[110px]" fill="none" stroke="#777">
        <path d="M0 1.500 h9 M45.500 0 v5 h9 v-5 M92 -3 l8 8 M100 -3 l-8 8" />
      </svg>
    </div>
    <div className="w-[174px] bg-black" />
  </div>
);

const App = () => (
  <div className="flex min-h-screen bg-white font-['Noto_Sans','Noto_Sans_CJK_SC',sans-serif] text-[13px] text-black">
    <div className="flex flex-1 rounded-[12px] bg-[conic-gradient(from_300deg,#3f78c8,#2f9a68_40deg,#24a04a_120deg,#e8b52c_190deg,#c26a35_240deg,#cc2f3a_290deg,#3f78c8_350deg)] p-px">
      <div className="relative flex flex-1 px-[7px] pt-[6px] pb-2">
        <Backdrop />
        <div className="relative flex min-w-0 flex-1 flex-col border border-[#a9a9ad] bg-[#f0f0f2] shadow-[0_0_5px_rgba(0,0,0,0.35)]">
          <header>
            <div className="flex h-[30px] items-center gap-3 pr-[7px] pl-3">
              <WinSnapLogo className="size-5" />
              <h1 className="flex-1">
                未命名截图 - <span className="text-xs">WinSnap</span>
              </h1>
              <button aria-label="最小化" className="flex w-[34px] justify-center">
                <svg viewBox="0 0 12 12" className="size-3" aria-hidden="true">
                  <path d="M1.500 9 H10.500" stroke="#000" strokeWidth="2" />
                </svg>
              </button>
              <button aria-label="最大化" className="flex w-[34px] justify-center">
                <svg viewBox="0 0 12 12" className="size-3" fill="none" stroke="#000" aria-hidden="true">
                  <path d="M1.500 1.500 H10.500 V10.500 H1.500Z" />
                  <path d="M1 2 H11" strokeWidth="2" />
                </svg>
              </button>
              <button aria-label="关闭" className="flex w-[34px] justify-center">
                <svg viewBox="0 0 12 12" className="size-3" aria-hidden="true">
                  <path d="M1.500 1.500 L10.500 10.500 M10.500 1.500 L1.500 10.500" stroke="#000" strokeWidth="1.800" />
                </svg>
              </button>
            </div>
            <nav className="flex h-7 items-center gap-[17px] pl-[11px]">
              {menus.map(([name, key]) => (
                <button key={key} className="whitespace-nowrap">
                  {name}
                  <span className="text-xs">({key})</span>
                </button>
              ))}
            </nav>
          </header>
          <div className="flex flex-1">
            <main className="flex min-w-0 flex-1 flex-col">
              <div className="flex flex-1 items-center justify-center bg-white pt-[31px] pr-[2px] pb-[33px]">
                <Desktop />
              </div>
              <ToolBar />
            </main>
            <SidePanel />
          </div>
        </div>
      </div>
    </div>
  </div>
);

export default App;
